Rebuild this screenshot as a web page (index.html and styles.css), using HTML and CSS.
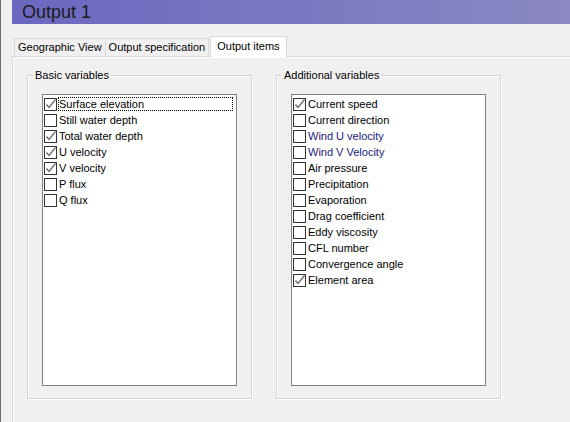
FILE: index.html
```html
<!DOCTYPE html>
<html lang="en">
<head>
    <meta charset="UTF-8">
    <title>Output 1</title>
    <link rel="stylesheet" href="styles.css">
</head>
<body>
    <div class="window">
        <div class="titlebar">Output 1</div>

        <div class="tabs">
            <div class="tab">Geographic View</div>
            <div class="tab">Output specification</div>
            <div class="tab active">Output items</div>
        </div>

        <div class="panel">
            <fieldset class="group">
                <legend>Basic variables</legend>
                <div class="listbox">
                    <div class="row"><span class="box"><svg viewBox="0 0 11 11"><path d="M1.5 5.5 L4 8.5 L10.5 0.5"/></svg></span><span class="label focus">Surface elevation</span></div>
                    <div class="row"><span class="box"></span><span class="label">Still water depth</span></div>
                    <div class="row"><span class="box"><svg viewBox="0 0 11 11"><path d="M1.5 5.5 L4 8.5 L10.5 0.5"/></svg></span><span class="label">Total water depth</span></div>
                    <div class="row"><span class="box"><svg viewBox="0 0 11 11"><path d="M1.5 5.5 L4 8.5 L10.5 0.5"/></svg></span><span class="label">U velocity</span></div>
                    <div class="row"><span class="box"><svg viewBox="0 0 11 11"><path d="M1.5 5.5 L4 8.5 L10.5 0.5"/></svg></span><span class="label">V velocity</span></div>
                    <div class="row"><span class="box"></span><span class="label">P flux</span></div>
                    <div class="row"><span class="box"></span><span class="label">Q flux</span></div>
                </div>
            </fieldset>

            <fieldset class="group">
                <legend>Additional variables</legend>
                <div class="listbox">
                    <div class="row"><span class="box"><svg viewBox="0 0 11 11"><path d="M1.5 5.5 L4 8.5 L10.5 0.5"/></svg></span><span class="label">Current speed</span></div>
                    <div class="row"><span class="box"></span><span class="label">Current direction</span></div>
                    <div class="row"><span class="box"></span><span class="label wind">Wind U velocity</span></div>
                    <div class="row"><span class="box"></span><span class="label wind">Wind V Velocity</span></div>
                    <div class="row"><span class="box"></span><span class="label">Air pressure</span></div>
                    <div class="row"><span class="box"></span><span class="label">Precipitation</span></div>
                    <div class="row"><span class="box"></span><span class="label">Evaporation</span></div>
                    <div class="row"><span class="box"></span><span class="label">Drag coefficient</span></div>
                    <div class="row"><span class="box"></span><span class="label">Eddy viscosity</span></div>
                    <div class="row"><span class="box"></span><span class="label">CFL number</span></div>
                    <div class="row"><span class="box"></span><span class="label">Convergence angle</span></div>
                    <div class="row"><span class="box"><svg viewBox="0 0 11 11"><path d="M1.5 5.5 L4 8.5 L10.5 0.5"/></svg></span><span class="label">Element area</span></div>
                </div>
            </fieldset>
        </div>
    </div>
</body>
</html>
```

FILE: styles.css
```css
:root {
    --face: #f0f0f0;
    --tab-line: #d9d9d9;
    --group-line: #d5d5d5;
    --list-line: #828282;
}

body {
    margin: 0;
    height: 422px;
    overflow: hidden;
    background: var(--face);
    font-family: 'Liberation Sans', Arial, sans-serif;
    font-size: 11px;
    color: #000;
}

.window {
    box-sizing: border-box;
    display: flex;
    flex-direction: column;
    height: 100%;
    border-left: 1px solid #6d6d6d;
    padding-left: 11px;
}

.titlebar {
    height: 24px;
    padding-left: 10px;
    background: linear-gradient(to right, #6a67c0, #8b88c3);
    font-size: 18px;
    line-height: 24px;
    color: #1b1b1b;
}

.tabs {
    display: flex;
    align-items: flex-end;
    height: 20px;
    margin-top: 12px;
    padding-left: 2px;
}

.tab {
    box-sizing: border-box;
    height: 18px;
    padding: 0 3px;
    margin-right: -1px;
    border: 1px solid var(--tab-line);
    border-bottom: none;
    line-height: 17px;
    background: var(--face);
}

.tab.active {
    position: relative;
    z-index: 1;
    height: 21px;
    margin: 0 0 -1px 2px;
    padding: 0 6px;
    background: #fff;
    line-height: 18px;
}

.panel {
    flex: 1;
    display: flex;
    gap: 24px;
    padding: 12px 0 0 14px;
    border-top: 1px solid var(--tab-line);
    border-left: 1px solid var(--tab-line);
    box-shadow: inset 1px 1px 0 #fff;
}

.group {
    box-sizing: border-box;
    width: 225px;
    height: 330px;
    margin: 0;
    padding: 0 0 11px;
    border: 1px solid var(--group-line);
    box-shadow: inset 1px 1px 0 #fff, 1px 1px 0 #fff;
}

.group legend {
    margin-left: 5px;
    padding: 0 2px;
    line-height: 13px;
}

.listbox {
    box-sizing: border-box;
    height: 292px;
    margin: 12px 14px 0;
    padding: 1px 0 0 1px;
    background: #fff;
    border: 1px solid var(--list-line);
}

.row {
    display: flex;
    align-items: center;
    height: 16px;
}

.box {
    box-sizing: border-box;
    flex: none;
    width: 13px;
    height: 13px;
    border: 1px solid #333;
    background: #fff;
}

.box svg {
    display: block;
    width: 11px;
    height: 11px;
    overflow: visible;
}

.box path {
    fill: none;
    stroke: #6b6b6b;
    stroke-width: 1.3;
}

.label {
    box-sizing: border-box;
    height: 14px;
    margin-left: 1px;
    border: 1px solid transparent;
    line-height: 12px;
    white-space: nowrap;
}

.label.focus {
    flex: 1;
    margin-right: 3px;
    border: 1px dotted #000;
}

.label.wind {
    color: #18207c;
}
```
